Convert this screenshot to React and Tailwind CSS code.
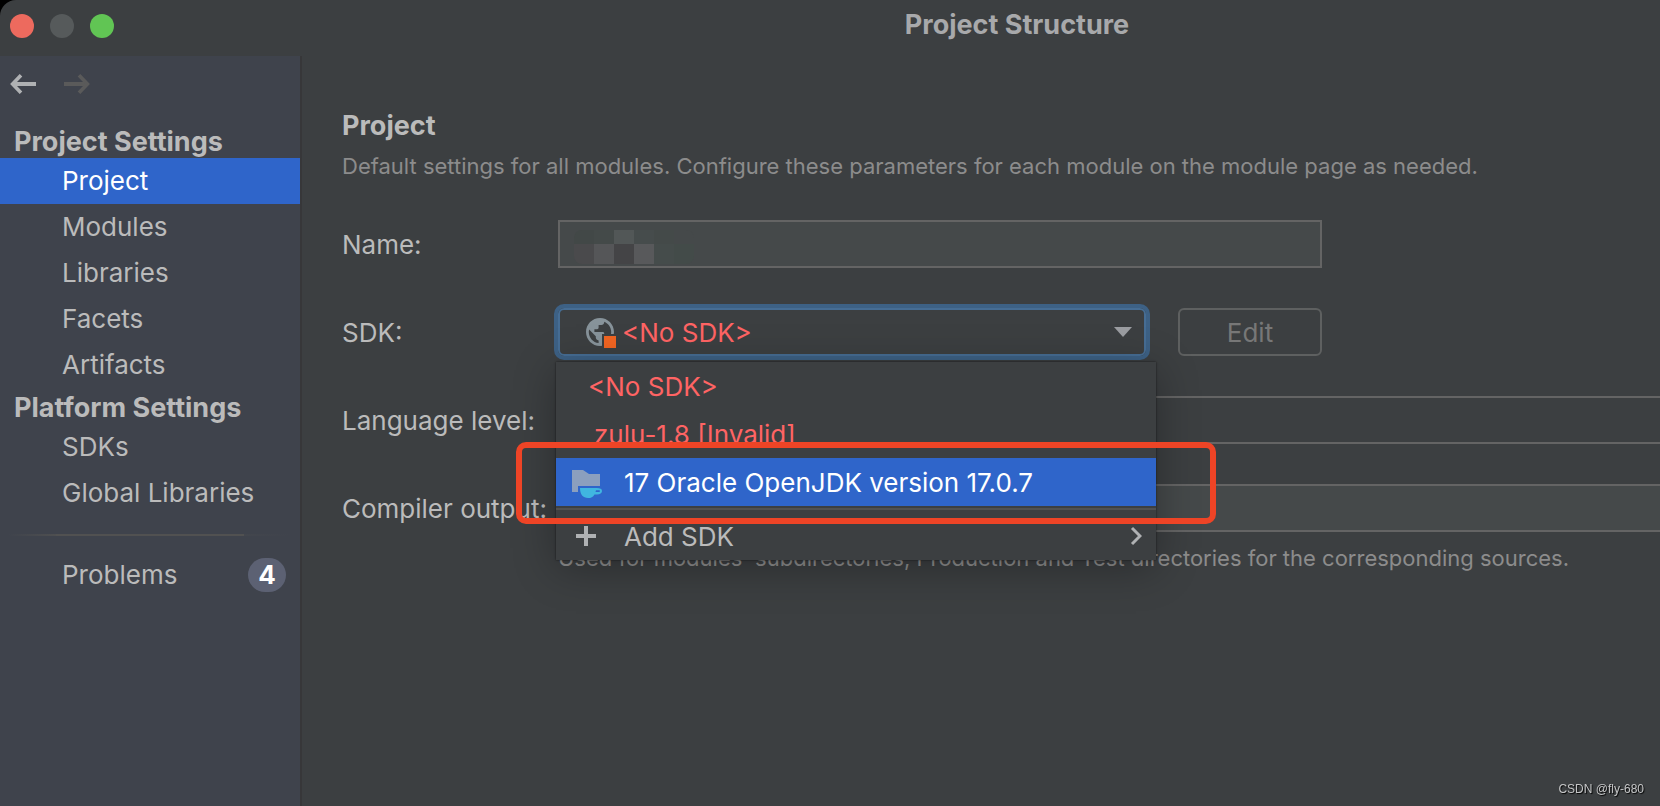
import React from 'react';

const SECTIONS = [
    { title: 'Project Settings', items: ['Project', 'Modules', 'Libraries', 'Facets', 'Artifacts'] },
    { title: 'Platform Settings', items: ['SDKs', 'Global Libraries'] },
];

const ArrowIcon = ({ className = '' }) => (
    <svg viewBox="0 0 26 20" className={`w-[26px] h-5 ${className}`} fill="none" stroke="currentColor" aria-hidden="true">
        <path d="M2 10H26" strokeWidth="4" />
        <path d="M11 1.200L2.600 10l8.400 8.800" strokeWidth="3.600" />
    </svg>
);

const GlobeIcon = () => (
    <svg viewBox="0 -2 32 32" className="w-8 h-8" aria-hidden="true">
        <path
            fill="#87939a"
            transform="translate(-2.8 -2.8) scale(1.4)"
            d="M12 2C6.48 2 2 6.48 2 12s4.48 10 10 10 10-4.48 10-10S17.52 2 12 2zm-1 17.93c-3.95-.49-7-3.85-7-7.93 0-.62.08-1.21.21-1.79L9 15v1c0 1.1.9 2 2 2v1.93zm6.9-2.54c-.26-.81-1-1.39-1.9-1.39h-1v-3c0-.55-.45-1-1-1H8v-2h2c.55 0 1-.45 1-1V7h2c1.1 0 2-.9 2-2v-.41c2.93 1.19 5 4.06 5 7.41 0 2.08-.8 3.97-2.1 5.39z"
        />
        <path fill="#3c3f41" d="M16 16h16v16H16z" />
        <path fill="#f26522" d="M18 18h12v12H18z" />
    </svg>
);

const JdkIcon = () => (
    <svg viewBox="0 0 32 32" className="w-8 h-8" aria-hidden="true">
        <path fill="#8b9fbe" d="M0 4h11l6 4h11v12H6v6H0z" />
        <path fill="#40b6e0" d="M8 22h17c3 0 5 .8 5 3s-2 3.400-5 3.400h-2.500C21 31 19 32 16 32c-5 0-8-3.500-8-10z" />
        <path fill="#2f65ca" d="M24 24.200h2.500c1 0 1.500.2 1.500.9s-.6 1-1.500 1h-3z" />
    </svg>
);

const NavItem = ({ label, active, children }) => (
    <a
        href="#"
        className={`flex items-center justify-between h-[46px] pl-[62px] pr-[14px] ${active ? 'bg-[#2f65ca] text-white' : ''}`}
    >
        {label}
        {children}
    </a>
);

const Sidebar = () => (
    <aside className="w-[302px] shrink-0 bg-[#3f434c] border-r-2 border-[#373739]">
        <div className="flex items-center gap-7 h-14 pl-[10px] mb-[10px]">
            <button type="button" aria-label="Back" className="text-[#afb1b3]">
                <ArrowIcon />
            </button>
            <button type="button" aria-label="Forward" disabled className="text-[#5a5a5a]">
                <ArrowIcon className="rotate-180" />
            </button>
        </div>
        <nav>
            {SECTIONS.map((section) => (
                <div key={section.title}>
                    <h2 className="h-9 pl-[14px] pt-0.5 text-[27px] leading-9 font-bold">{section.title}</h2>
                    {section.items.map((item) => (
                        <NavItem key={item} label={item} active={item === 'Project'} />
                    ))}
                </div>
            ))}
            <div className="h-0.5 mx-2 mt-[18px] mb-4 bg-linear-to-r from-transparent via-[#515151] via-20% to-transparent">
                <div className="h-0.5 mx-12 bg-[#515151]" />
            </div>
            <NavItem label="Problems">
                <span className="w-[38px] h-[34px] leading-[34px] rounded-full bg-[#5c6173] text-white font-bold text-center">
                    4
                </span>
            </NavItem>
        </nav>
    </aside>
);

const Row = ({ id, label, children }) => (
    <div className="flex items-center h-12">
        <label htmlFor={id} className="w-[216px] shrink-0 pt-0.5 whitespace-nowrap">
            {label}
        </label>
        {children}
    </div>
);

const MOSAIC = [
    'bg-[#424847]', 'bg-[#444a49]', 'bg-[#525757]', 'bg-[#464c4c]', 'bg-[#444a49]', 'bg-[#45494a]',
    'bg-[#4a4a4c]', 'bg-[#555658]', 'bg-[#444446]', 'bg-[#58595b]', 'bg-[#454c4b]', 'bg-[#434b49]',
];

const SdkPopup = () => (
    <div className="absolute z-10 top-[54px] -left-0.5 w-[600px] bg-[#3c3f41] shadow-[0_8px_40px_rgba(0,0,0,0.3),0_0_2px_rgba(0,0,0,0.6)]">
        <ul role="listbox" aria-label="SDK">
            <li role="option" aria-selected="false" className="flex items-center h-12 pt-0.5 pl-8 text-[#ff6464]">
                &lt;No SDK&gt;
            </li>
            <li role="option" aria-selected="false" className="flex items-center h-12 pt-0.5 pl-[38px] text-[#ff6464]">
                zulu-1.8 [Invalid]
            </li>
            <li role="option" aria-selected="true" className="flex items-center h-12 gap-5 pl-4 bg-[#2f65ca] text-white">
                <JdkIcon />
                <span className="pt-0.5">17 Oracle OpenJDK version 17.0.7</span>
            </li>
        </ul>
        <div className="h-0.5 my-0.5 bg-[#515151]" />
        <button type="button" className="flex items-center w-full h-12 pl-5 pr-[14px]">
            <svg viewBox="0 0 20 20" className="w-5 h-5 mr-7" stroke="#afb1b3" strokeWidth="4" aria-hidden="true">
                <path d="M10 0v20M0 10h20" />
            </svg>
            <span className="pt-0.5">Add SDK</span>
            <svg viewBox="0 0 12 20" className="w-3 h-5 ml-auto" fill="none" stroke="#afb1b3" strokeWidth="3" aria-hidden="true">
                <path d="M2 2l8 8-8 8" />
            </svg>
        </button>
        <div className="absolute top-20 -left-10 w-[700px] h-[82px] border-6 border-[#ee4426] rounded-[10px] pointer-events-none" />
    </div>
);

const ProjectPage = () => (
    <main className="relative flex-1 min-w-0 pl-10 pt-[50px] overflow-hidden">
        <h2 className="pt-0.5 text-[27px] leading-9 font-bold">Project</h2>
        <p className="mt-1.5 leading-8 text-[22px] text-[#8c8c8c] whitespace-nowrap">
            Default settings for all modules. Configure these parameters for each module on the module page as needed.
        </p>
        <form className="flex flex-col gap-10 mt-[38px]">
            <Row id="name" label="Name:">
                <div className="relative w-[764px]">
                    <input id="name" type="text" className="block w-full h-12 border-2 border-[#646464] bg-[#45494a]" />
                    <div className="absolute left-4 top-2.5 grid grid-cols-6 grid-rows-[14px_20px] w-[120px] rounded-lg overflow-hidden">
                        {MOSAIC.map((color, i) => (
                            <span key={i} className={color} />
                        ))}
                    </div>
                </div>
            </Row>
            <Row id="sdk" label="SDK:">
                <div className="relative w-[588px]">
                    <select
                        id="sdk"
                        className="block w-full h-12 pt-0.5 pl-[62px] appearance-none rounded-md border-2 border-[#466d94] bg-[#3c3f41] text-[#ff6464] outline-4 outline-[#3d6185]"
                    >
                        <option>&lt;No SDK&gt;</option>
                    </select>
                    <div className="absolute inset-0 flex items-center justify-between pl-7 pr-[14px] pointer-events-none">
                        <GlobeIcon />
                        <svg viewBox="0 0 18 10" className="w-[18px] h-[10px]" aria-hidden="true">
                            <path fill="#9b9da1" d="M0 0h18l-9 10z" />
                        </svg>
                    </div>
                    <SdkPopup />
                </div>
                <button type="button" disabled className="w-36 h-12 pt-0.5 ml-8 rounded-md border-2 border-[#5e6060] text-[#777777]">
                    Edit
                </button>
            </Row>
            <Row id="level" label="Language level:">
                <select id="level" className="flex-1 h-12 appearance-none border-2 border-r-0 border-[#646464] bg-[#3c3f41]" />
            </Row>
            <div>
                <Row id="output" label="Compiler output:">
                    <input id="output" type="text" className="flex-1 h-12 border-2 border-r-0 border-[#646464] bg-[#45494a]" />
                </Row>
                <p className="pl-[216px] mt-[10px] leading-8 text-[22px] text-[#8c8c8c] whitespace-nowrap">
                    Used for modules' subdirectories, Production and Test directories for the corresponding sources.
                </p>
            </div>
        </form>
    </main>
);

const App = () => (
    <div className="min-h-screen bg-black">
        <div className="flex flex-col min-h-screen rounded-tl-2xl overflow-hidden bg-[#3c3f41] text-[#bbbbbb] text-[26px] leading-9 font-[Inter,sans-serif]">
            <header className="flex items-center h-14 pb-1 shrink-0">
                <div className="flex items-center gap-4 w-[374px] pl-[10px] shrink-0">
                    <button type="button" aria-label="Close" className="w-6 h-6 rounded-full bg-[#ed6a5e]" />
                    <button type="button" aria-label="Minimize" disabled className="w-6 h-6 rounded-full bg-[#565a5b]" />
                    <button type="button" aria-label="Zoom" className="w-6 h-6 rounded-full bg-[#61c554]" />
                </div>
                <h1 className="flex-1 pb-0.5 text-center text-[27px] font-bold text-[#a8a9ab]">Project Structure</h1>
            </header>
            <div className="flex flex-1">
                <Sidebar />
                <ProjectPage />
            </div>
            <footer className="fixed right-4 bottom-[7px] text-[12px] leading-5 text-[#c4c5c6] font-['Liberation_Sans',sans-serif] [text-shadow:1px_1px_1px_#000]">
                CSDN @fly-680
            </footer>
        </div>
    </div>
);

export default App;
